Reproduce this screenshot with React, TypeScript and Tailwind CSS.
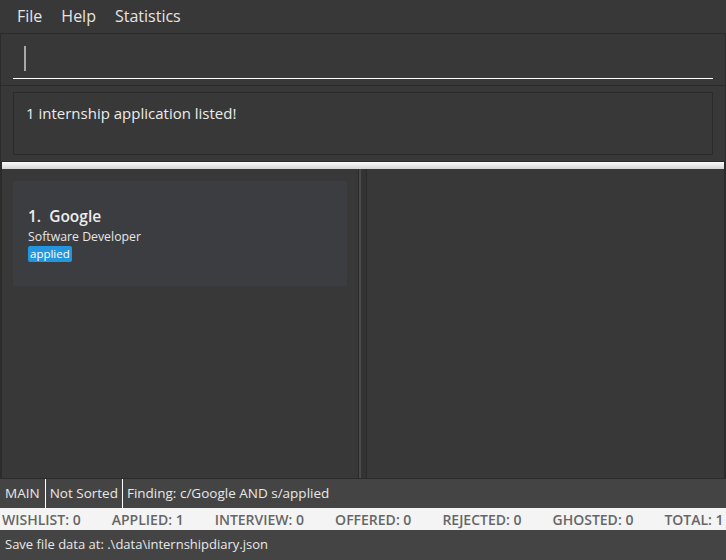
import React from "react";

const FONT = { fontFamily: '"Open Sans", "Noto Sans", sans-serif' };

const STATS: [string, number][] = [
  ["WISHLIST", 0],
  ["APPLIED", 1],
  ["INTERVIEW", 0],
  ["OFFERED", 0],
  ["REJECTED", 0],
  ["GHOSTED", 0],
  ["TOTAL", 1],
];

function MenuBar() {
  return (
    <div className="flex h-[34px] items-center gap-[19px] border-b border-[#2b2b2b] bg-[#383838] pl-[17px] text-[16px] text-[#e4e4e4]">
      <span>File</span>
      <span>Help</span>
      <span>Statistics</span>
    </div>
  );
}

function CommandBox() {
  return (
    <div className="h-[52px] border-b border-l border-r border-[#2b2b2b] bg-[#383838] px-[12px] pt-[12px]">
      <div className="flex h-[33px] items-start border-b border-white pl-[11px]">
        <div className="h-[25px] w-[2px] bg-[#a8a8a8]" />
      </div>
    </div>
  );
}

function ResultDisplay() {
  return (
    <div className="h-[75px] border-l border-r border-[#2b2b2b] bg-[#383838] px-[12px] pt-[6px]">
      <div className="h-[63px] border border-[#2a2a2a] px-[12px] pt-[9px] text-[15px] text-[#ececec]">
        1 internship application listed!
      </div>
    </div>
  );
}

function Divider() {
  return (
    <div className="h-[8px] border-l-2 border-r-2 border-t border-[#2b2b2b] bg-gradient-to-b from-[#fafafa] to-[#d4d4d4]" />
  );
}

function ApplicationCard() {
  return (
    <div className="mx-[11px] mt-[12px] h-[105px] bg-[#3c3d40] px-[15px] pt-[25px]">
      <div className="text-[15.5px] font-semibold leading-[20px] text-[#ececec]">
        1.&nbsp;&nbsp;Google
      </div>
      <div className="mt-[3px] text-[12.3px] leading-[16px] text-[#e6e6e6]">
        Software Developer
      </div>
      <div className="mt-[1px] w-fit rounded-[2px] bg-[#2496de] px-[2px] text-[11.5px] leading-[16px] text-white">
        applied
      </div>
    </div>
  );
}

function MainPanels() {
  return (
    <div className="flex h-[310px] bg-[#383838]">
      <div className="w-[358px] border-l-2 border-[#2b2b2b]">
        <ApplicationCard />
      </div>
      <div className="flex w-[9px] border-l border-r border-[#2b2b2b]">
        <div className="w-[2px] bg-[#4a4a4a]" />
        <div className="flex-1 bg-[#333333]" />
      </div>
      <div className="flex-1 border-r-2 border-[#2b2b2b]" />
    </div>
  );
}

function StatusBar() {
  return (
    <div className="flex h-[30px] items-stretch border-t border-[#2b2b2b] bg-[#444444] text-[13.5px] text-[#e8e8e8]">
      <div className="flex items-center border-r border-white px-[5px]">MAIN</div>
      <div className="flex items-center border-r border-white px-[4px]">Not Sorted</div>
      <div className="flex items-center px-[4px]">Finding: c/Google AND s/applied</div>
    </div>
  );
}

function StatsBar() {
  return (
    <div className="flex h-[22px] items-center gap-[31px] overflow-hidden whitespace-nowrap bg-[#f4f4f4] pl-[2px] text-[14px] font-semibold text-[#666666]">
      {STATS.map(([label, n]) => (
        <span key={label}>
          {label}: {n}
        </span>
      ))}
    </div>
  );
}

function Footer() {
  return (
    <div className="flex h-[30px] items-center bg-[#444444] pl-[5px] text-[13px] text-[#e8e8e8]">
      Save file data at: .\data\internshipdiary.json
    </div>
  );
}

export default function App() {
  return (
    <div className="flex h-[560px] w-[726px] flex-col overflow-hidden bg-[#383838]" style={FONT}>
      <MenuBar />
      <CommandBox />
      <ResultDisplay />
      <Divider />
      <MainPanels />
      <StatusBar />
      <StatsBar />
      <Footer />
    </div>
  );
}
